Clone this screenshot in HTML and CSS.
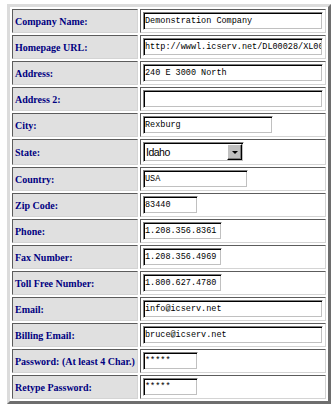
FILE: index.html
```html
<!DOCTYPE html>
<html lang="en">
<head>
    <meta charset="UTF-8">
    <meta name="viewport" content="width=device-width, initial-scale=1.0">
    <title>Company Profile</title>
    <link rel="stylesheet" href="styles.css">
</head>
<body>
    <form id="profileForm">
        <table class="form-table">
            <tr>
                <td class="label">Company Name:</td>
                <td class="field"><input type="text" class="text w-full" name="company" value="Demonstration Company"></td>
            </tr>
            <tr>
                <td class="label">Homepage URL:</td>
                <td class="field"><input type="text" class="text w-full" name="url" value="http://wwwl.icserv.net/DL00028/XL0028/index.html"></td>
            </tr>
            <tr>
                <td class="label">Address:</td>
                <td class="field"><input type="text" class="text w-full" name="address" value="240 E 3000 North"></td>
            </tr>
            <tr>
                <td class="label">Address 2:</td>
                <td class="field"><input type="text" class="text w-full" name="address2" value=""></td>
            </tr>
            <tr>
                <td class="label">City:</td>
                <td class="field"><input type="text" class="text w-city" name="city" value="Rexburg"></td>
            </tr>
            <tr class="tall">
                <td class="label">State:</td>
                <td class="field">
                    <span class="select-wrap">
                        <select name="state" class="select">
                            <option selected>Idaho</option>
                            <option>Utah</option>
                            <option>Wyoming</option>
                        </select>
                        <span class="select-btn">
                            <svg width="8" height="5" viewBox="0 0 8 5"><path d="M1 1h6L4 4z" fill="#000"/></svg>
                        </span>
                    </span>
                </td>
            </tr>
            <tr>
                <td class="label">Country:</td>
                <td class="field"><input type="text" class="text w-country" name="country" value="USA"></td>
            </tr>
            <tr>
                <td class="label">Zip Code:</td>
                <td class="field"><input type="text" class="text w-short" name="zip" value="83440"></td>
            </tr>
            <tr>
                <td class="label">Phone:</td>
                <td class="field"><input type="text" class="text w-phone" name="phone" value="1.208.356.8361"></td>
            </tr>
            <tr>
                <td class="label">Fax Number:</td>
                <td class="field"><input type="text" class="text w-phone" name="fax" value="1.208.356.4969"></td>
            </tr>
            <tr>
                <td class="label">Toll Free Number:</td>
                <td class="field"><input type="text" class="text w-phone" name="tollfree" value="1.800.627.4780"></td>
            </tr>
            <tr>
                <td class="label">Email:</td>
                <td class="field"><input type="text" class="text w-full" name="email" value="info@icserv.net"></td>
            </tr>
            <tr>
                <td class="label">Billing Email:</td>
                <td class="field"><input type="text" class="text w-full" name="billing" value="bruce@icserv.net"></td>
            </tr>
            <tr>
                <td class="label">Password: (At least 4 Char.)</td>
                <td class="field"><input type="text" class="text w-short" name="password" value="*****"></td>
            </tr>
            <tr>
                <td class="label">Retype Password:</td>
                <td class="field"><input type="text" class="text w-short" name="password2" value="*****"></td>
            </tr>
        </table>
    </form>
</body>
</html>
```

FILE: styles.css
```css
/* Page */
body {
    margin: 4px 0 0 7px;
    background-color: #ffffff;
}

form {
    margin: 0;
}

/* Outer table */
.form-table {
    border-collapse: separate;
    border-spacing: 2px;
    border: 3px solid;
    border-color: #dcdcdc #6e6e6e #6e6e6e #dcdcdc;
}

.form-table td {
    height: 22px;
    padding: 0 2px;
    border: 1px solid;
    border-color: #5c5c5c #d4d4d4 #d4d4d4 #5c5c5c;
    vertical-align: middle;
}

.form-table tr.tall td {
    height: 24px;
}

/* Label column */
.label {
    width: 120px;
    background-color: #e0e0e0;
    color: #000080;
    font-family: "Liberation Serif", "Times New Roman", serif;
    font-size: 10px;
    font-weight: bold;
    white-space: nowrap;
}

/* Field column */
.field {
    width: 179px;
    background-color: #ffffff;
}

/* Text inputs */
.text {
    display: block;
    box-sizing: border-box;
    height: 18px;
    margin: 0;
    padding: 0 1px;
    border: 1px solid;
    border-color: #808080 #ffffff #ffffff #808080;
    box-shadow: inset 1px 1px 0 #000000, inset -1px -1px 0 #c0c0c0;
    background-color: #ffffff;
    font-family: "Liberation Mono", "Courier New", monospace;
    font-size: 8.5px;
    color: #000000;
    outline: none;
}

.w-full { width: 180px; }
.w-city { width: 130px; }
.w-country { width: 105px; }
.w-phone { width: 79px; }
.w-short { width: 55px; }

/* State dropdown */
.select-wrap {
    position: relative;
    display: block;
    width: 101px;
    height: 20px;
}

.select {
    -webkit-appearance: none;
    appearance: none;
    box-sizing: border-box;
    width: 101px;
    height: 20px;
    margin: 0;
    padding: 0 0 0 2px;
    border: 1px solid;
    border-color: #808080 #ffffff #ffffff #808080;
    border-radius: 0;
    box-shadow: inset 1px 1px 0 #000000, inset -1px -1px 0 #c0c0c0;
    background-color: #ffffff;
    font-family: "Liberation Sans", Arial, sans-serif;
    font-size: 10.5px;
    letter-spacing: -0.5px;
    color: #000000;
}

.select-btn {
    position: absolute;
    top: 2px;
    right: 2px;
    box-sizing: border-box;
    width: 15px;
    height: 16px;
    display: flex;
    align-items: center;
    justify-content: center;
    background-color: #c0c0c0;
    border: 1px solid;
    border-color: #ffffff #000000 #000000 #ffffff;
    box-shadow: inset -1px -1px 0 #808080;
    pointer-events: none;
}
```
